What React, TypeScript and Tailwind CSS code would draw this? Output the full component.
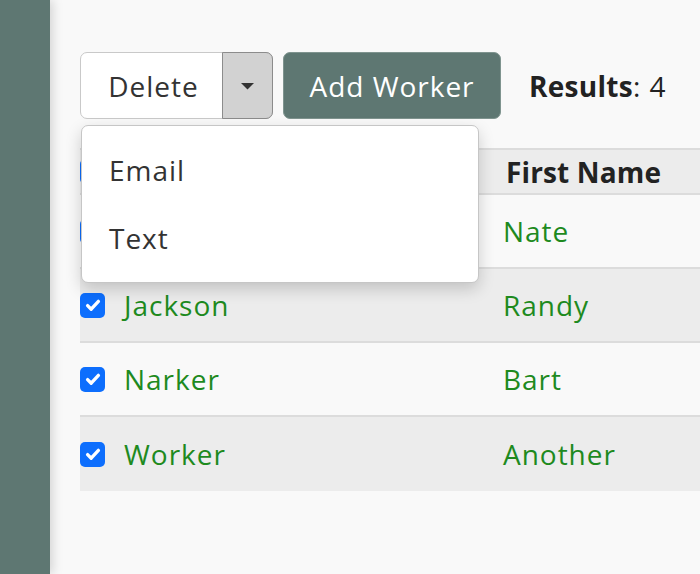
import React from 'react';

const rows = [
  { last: '', first: 'Nate' },
  { last: 'Jackson', first: 'Randy' },
  { last: 'Narker', first: 'Bart' },
  { last: 'Worker', first: 'Another' },
];

const Check: React.FC = () => (
  <div className="w-[25px] h-[25px] shrink-0 rounded-[5px] bg-[#0d6efd] flex items-center justify-center">
    <svg width="24" height="24" viewBox="0 0 20 20" fill="none">
      <path d="M5.5 10.5l3 3l6-6.5" stroke="#fff" strokeWidth="2.8" strokeLinecap="round" strokeLinejoin="round" />
    </svg>
  </div>
);

export default function App() {
  return (
    <div className="flex h-[574px] w-[700px] overflow-hidden bg-[#f9f9f9] text-[28px] tracking-[0.035em] text-[#333] font-['Open_Sans',sans-serif]">
      {/* Sidebar */}
      <aside className="w-[50px] shrink-0 bg-[#5e7772] shadow-[3px_0_10px_rgba(0,0,0,0.15)] z-10" />

      <main className="flex-1 pl-[30px] pt-[52px] overflow-hidden">
        {/* Toolbar */}
        <div className="relative flex items-center">
          <div className="flex h-[67px] rounded-[7px] border border-[#c9c9c9] bg-white">
            <button className="w-[141px] pl-1 text-[#333]">Delete</button>
            <button className="w-[51px] -my-px -mr-px flex items-center justify-center rounded-r-[7px] border-[1.5px] border-[#8c8c8c] bg-[#d2d2d2]">
              <svg width="15" height="8" viewBox="0 0 15 8">
                <path d="M1 1h13L7.5 7.5z" fill="#333" />
              </svg>
            </button>
          </div>
          <button className="ml-[10px] h-[67px] w-[218px] rounded-[7px] border border-[#7f948f] bg-[#5e7772] text-white">
            Add Worker
          </button>
          <div className="ml-[28px] text-[#222]">
            <span className="font-bold tracking-[0.01em]">Results</span>: 4
          </div>

          {/* Dropdown menu */}
          <div className="absolute left-[1px] top-[73px] z-20 w-[398px] rounded-[7px] border border-[#c6c6c6] bg-white py-[10px] shadow-[0_6px_16px_rgba(0,0,0,0.18)]">
            <div className="flex h-[68px] items-center pl-[27px]">Email</div>
            <div className="flex h-[68px] items-center pl-[27px]">Text</div>
          </div>
        </div>

        {/* Table */}
        <div className="mt-[29px] w-[800px]">
          <div className="flex h-[47px] items-center border-y-2 border-[#dcdcdc] bg-[#ececec]">
            <Check />
            <div className="ml-[19px] w-[379px]" />
            <div className="pl-[3px] font-bold tracking-[0.005em] text-[#222]">First Name</div>
          </div>
          {rows.map((r, i) => (
            <div
              key={r.first}
              className={`flex h-[74px] items-center ${i < rows.length - 1 ? 'border-b-2 border-[#dcdcdc]' : ''} ${i % 2 === 1 ? 'bg-[#ececec]' : 'bg-[#f9f9f9]'}`}
            >
              <Check />
              <div className="ml-[19px] w-[379px] text-[#1e8a1e]">{r.last}</div>
              <div className="text-[#1e8a1e]">{r.first}</div>
            </div>
          ))}
        </div>
      </main>
    </div>
  );
}
